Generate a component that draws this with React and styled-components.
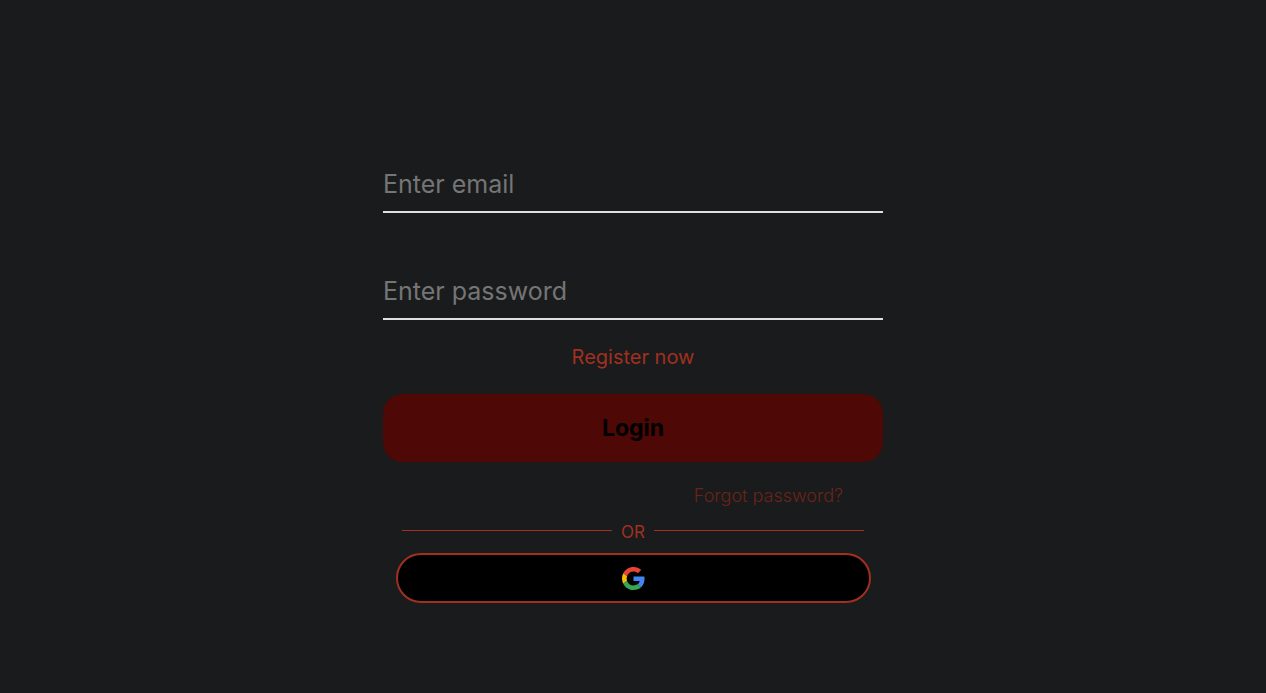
import React from "react";
import styled, { createGlobalStyle } from "styled-components";

const GlobalStyle = createGlobalStyle`
  *, *::before, *::after { box-sizing: border-box; }
  body {
    margin: 0;
    background: #1a1b1c;
    font-family: Inter, sans-serif;
  }
`;

const Page = styled.main`
  min-height: 100vh;
  display: flex;
  flex-direction: column;
  align-items: center;
  padding: 157px 16px 16px;
`;

const Form = styled.form`
  width: 100%;
  max-width: 500px;
  display: flex;
  flex-direction: column;
`;

const Field = styled.input`
  width: 100%;
  height: 56px;
  margin-bottom: 51px;
  padding: 0;
  border: 0;
  border-bottom: 2px solid #e0e0e0;
  border-radius: 0;
  background: transparent;
  color: #e0e0e0;
  font: 400 25px Inter, sans-serif;
  outline: none;
  &:last-of-type { margin-bottom: 0; }
  &::placeholder { color: #757575; opacity: 1; }
`;

const RegisterLink = styled.a`
  align-self: center;
  margin: 25px 0 24px;
  color: #a03020;
  font-size: 20px;
  line-height: 25px;
  text-decoration: none;
`;

const LoginButton = styled.button`
  height: 68px;
  padding: 0;
  border: 0;
  border-radius: 20px;
  background: #4e0805;
  color: #000;
  font: 700 23px Inter, sans-serif;
`;

const ForgotLink = styled.a`
  align-self: flex-end;
  margin: 23px 40px 0 0;
  color: #6b2419;
  font-size: 18px;
  font-weight: 300;
  line-height: 21px;
  text-decoration: none;
`;

const Divider = styled.div`
  display: flex;
  align-items: flex-start;
  gap: 9px;
  margin: 15px 19px 9px;
  color: #a03020;
  font-size: 17px;
  line-height: 23px;
  &::before, &::after {
    content: "";
    flex: 1;
    height: 1px;
    margin-top: 9px;
    background: #a03020;
  }
`;

const GoogleButton = styled.button`
  width: 95%;
  height: 50px;
  align-self: center;
  padding: 0;
  display: flex;
  align-items: center;
  justify-content: center;
  border: 2px solid #a03020;
  border-radius: 25px;
  background: #000;
`;

const GoogleLogo = () => (
  <svg width="23" height="23" viewBox="0 0 48 48" aria-hidden="true">
    <path fill="#EA4335" d="M24 9.5c3.54 0 6.71 1.22 9.21 3.6l6.85-6.85C35.9 2.38 30.47 0 24 0 14.62 0 6.51 5.38 2.56 13.22l7.98 6.19C12.43 13.72 17.74 9.5 24 9.5z" />
    <path fill="#4285F4" d="M46.98 24.55c0-1.57-.15-3.09-.38-4.55H24v9.02h12.94c-.58 2.96-2.26 5.48-4.78 7.18l7.73 6c4.51-4.18 7.09-10.36 7.09-17.65z" />
    <path fill="#FBBC05" d="M10.53 28.59c-.48-1.45-.76-2.99-.76-4.59s.27-3.14.76-4.59l-7.98-6.19C.92 16.46 0 20.12 0 24c0 3.88.92 7.54 2.56 10.78l7.97-6.19z" />
    <path fill="#34A853" d="M24 48c6.48 0 11.93-2.13 15.89-5.81l-7.73-6c-2.15 1.45-4.92 2.3-8.16 2.3-6.26 0-11.57-4.22-13.47-9.91l-7.98 6.19C6.51 42.62 14.62 48 24 48z" />
  </svg>
);

export default function App() {
  return (
    <>
      <GlobalStyle />
      <Page>
        <Form onSubmit={(event) => event.preventDefault()}>
          <Field type="email" placeholder="Enter email" aria-label="Email" />
          <Field type="password" placeholder="Enter password" aria-label="Password" />
          <RegisterLink href="#register">Register now</RegisterLink>
          <LoginButton type="submit">Login</LoginButton>
          <ForgotLink href="#forgot">Forgot password?</ForgotLink>
          <Divider>OR</Divider>
          <GoogleButton type="button" aria-label="Continue with Google">
            <GoogleLogo />
          </GoogleButton>
        </Form>
      </Page>
    </>
  );
}
